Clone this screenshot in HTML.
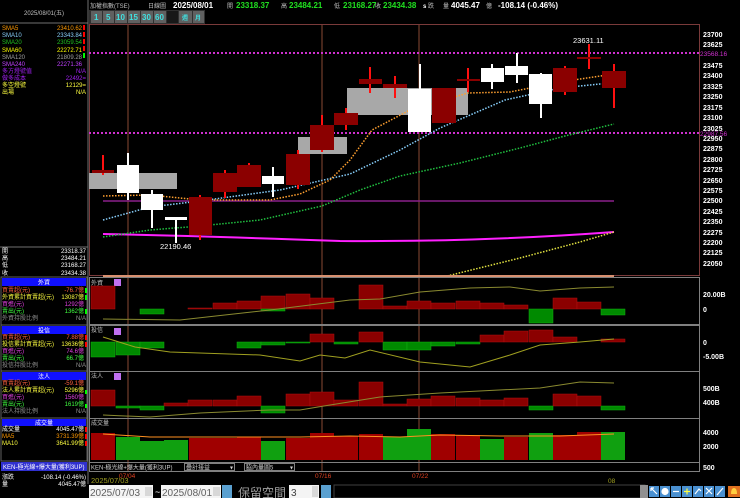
<!DOCTYPE html>
<html><head><meta charset="utf-8"><style>
html,body{margin:0;padding:0;background:#000;width:740px;height:498px;overflow:hidden}
svg{display:block}
text{font-family:"Liberation Sans","Noto Sans CJK TC",sans-serif}
.s{font-size:6px}
</style></head><body>
<svg width="740" height="498" viewBox="0 0 740 498" xmlns="http://www.w3.org/2000/svg">
<rect width="740" height="498" fill="#000"/>
<line x1="88" y1="0" x2="88" y2="484" stroke="#707070"/>
<line x1="0" y1="23" x2="88" y2="23" stroke="#707070"/>
<line x1="0" y1="247" x2="88" y2="247" stroke="#707070"/>
<text x="44" y="15" class="s" fill="#c0c0c0" text-anchor="middle">2025/08/01(五)</text>
<g class="s">
<text x="2" y="30" fill="#ff9900">SMA5</text><text x="82" y="30" fill="#ff9900" text-anchor="end">23410.62</text>
<text x="2" y="37" fill="#87cefa">SMA10</text><text x="82" y="37" fill="#87cefa" text-anchor="end">23343.84</text>
<text x="2" y="44" fill="#20c020">SMA20</text><text x="82" y="44" fill="#20c020" text-anchor="end">23059.54</text>
<text x="2" y="52" fill="#ffff00">SMA60</text><text x="82" y="52" fill="#ffff00" text-anchor="end">22272.71</text>
<text x="2" y="59" fill="#a0a0a0">SMA120</text><text x="82" y="59" fill="#a0a0a0" text-anchor="end">21809.28</text>
<text x="2" y="66" fill="#c040ff">SMA240</text><text x="82" y="66" fill="#c040ff" text-anchor="end">22271.36</text>
<text x="2" y="73" fill="#a020f0">多方燈號值</text><text x="86" y="73" fill="#a020f0" text-anchor="end">N/A</text>
<text x="2" y="80" fill="#a020f0">做多成本</text><text x="86" y="80" fill="#a020f0" text-anchor="end">22492=</text>
<text x="2" y="87" fill="#ffff40">多空燈號</text><text x="86" y="87" fill="#ffff40" text-anchor="end">12129=</text>
<text x="2" y="94" fill="#ffff40">出場</text><text x="86" y="94" fill="#ffff40" text-anchor="end">N/A</text>
</g>
<g fill="#ff0000"><rect x="83" y="25" width="2" height="5"/><rect x="83" y="32" width="2" height="5"/><rect x="83" y="39" width="2" height="5"/><rect x="83" y="46" width="2" height="5"/></g>
<rect x="83" y="53" width="2" height="5" fill="#00ff00"/>
<g class="s" fill="#fff">
<text x="2" y="253">開</text><text x="86" y="253" text-anchor="end">23318.37</text>
<text x="2" y="260">高</text><text x="86" y="260" text-anchor="end">23484.21</text>
<text x="2" y="267">低</text><text x="86" y="267" text-anchor="end">23168.27</text>
<text x="2" y="275">收</text><text x="86" y="275" text-anchor="end">23434.38</text>
</g>
<g class="s">
<rect x="1" y="277" width="86" height="48" fill="none" stroke="#606060"/>
<rect x="2" y="278" width="84" height="8" fill="#1010ff"/><text x="44" y="284.5" fill="#fff" text-anchor="middle">外資</text>
<text x="2" y="292" fill="#ff6040">買賣超(元)</text><text x="84" y="292" fill="#ff6040" text-anchor="end">-76.7億</text>
<text x="2" y="299" fill="#ffff40">外資累計買賣超(元)</text><text x="84" y="299" fill="#ffff40" text-anchor="end">13087億</text>
<text x="2" y="306" fill="#e040e0">買進(元)</text><text x="84" y="306" fill="#e040e0" text-anchor="end">1292億</text>
<text x="2" y="313" fill="#40ff40">賣出(元)</text><text x="84" y="313" fill="#40ff40" text-anchor="end">1362億</text>
<text x="2" y="320" fill="#909090">外資持股比例</text><text x="86" y="320" fill="#909090" text-anchor="end">N/A</text>

<rect x="1" y="325" width="86" height="46" fill="none" stroke="#606060"/>
<rect x="2" y="326" width="84" height="8" fill="#1010ff"/><text x="44" y="332.5" fill="#fff" text-anchor="middle">投信</text>
<text x="2" y="339" fill="#ff6040">買賣超(元)</text><text x="84" y="339" fill="#ff6040" text-anchor="end">7.88億</text>
<text x="2" y="346" fill="#ffff40">投信累計買賣超(元)</text><text x="84" y="346" fill="#ffff40" text-anchor="end">13636億</text>
<text x="2" y="353" fill="#e040e0">買進(元)</text><text x="84" y="353" fill="#e040e0" text-anchor="end">74.6億</text>
<text x="2" y="360" fill="#40ff40">賣出(元)</text><text x="84" y="360" fill="#40ff40" text-anchor="end">66.7億</text>
<text x="2" y="367" fill="#909090">投信持股比例</text><text x="86" y="367" fill="#909090" text-anchor="end">N/A</text>

<rect x="1" y="371" width="86" height="47" fill="none" stroke="#606060"/>
<rect x="2" y="372" width="84" height="8" fill="#1010ff"/><text x="44" y="378.5" fill="#fff" text-anchor="middle">法人</text>
<text x="2" y="385" fill="#ff6040">買賣超(元)</text><text x="84" y="385" fill="#ff6040" text-anchor="end">-59.1億</text>
<text x="2" y="392" fill="#ffff40">法人累計買賣超(元)</text><text x="84" y="392" fill="#ffff40" text-anchor="end">5296億</text>
<text x="2" y="399" fill="#e040e0">買進(元)</text><text x="84" y="399" fill="#e040e0" text-anchor="end">1560億</text>
<text x="2" y="406" fill="#40ff40">賣出(元)</text><text x="84" y="406" fill="#40ff40" text-anchor="end">1619億</text>
<text x="2" y="413" fill="#909090">法人持股比例</text><text x="86" y="413" fill="#909090" text-anchor="end">N/A</text>

<rect x="1" y="418" width="86" height="43" fill="none" stroke="#606060"/>
<rect x="2" y="419" width="84" height="7" fill="#1010ff"/><text x="44" y="425" fill="#fff" text-anchor="middle">成交量</text>
<text x="2" y="431" fill="#fff">成交量</text><text x="84" y="431" fill="#fff" text-anchor="end">4045.47億</text>
<text x="2" y="438" fill="#ff9900">MA5</text><text x="84" y="438" fill="#ff9900" text-anchor="end">3731.39億</text>
<text x="2" y="445" fill="#ffff40">MA10</text><text x="84" y="445" fill="#ffff40" text-anchor="end">3641.99億</text>

<rect x="1" y="462" width="86" height="9" fill="#3030d0"/><text x="3" y="469" fill="#fff">KEN-極光線+爆大量(獲利3UP)</text>
<text x="2" y="479" fill="#fff">漲跌</text><text x="86" y="479" fill="#fff" text-anchor="end">-108.14 (-0.46%)</text>
<text x="2" y="486" fill="#fff">量</text><text x="86" y="486" fill="#fff" text-anchor="end">4045.47億</text>
</g>
<g fill="#00ff00"><rect x="85" y="288" width="2" height="5"/><rect x="85" y="295" width="2" height="5"/><rect x="85" y="309" width="2" height="5"/><rect x="85" y="404" width="2" height="4"/><rect x="85" y="390" width="2" height="4"/></g>
<g fill="#ff0000"><rect x="85" y="335" width="2" height="5"/><rect x="85" y="342" width="2" height="5"/><rect x="85" y="427" width="2" height="5"/><rect x="85" y="434" width="2" height="5"/><rect x="85" y="441" width="2" height="5"/></g>

<text x="90" y="8" class="s" fill="#c0c0c0">加權指數(TSE)</text>
<text x="148" y="8" class="s" fill="#c0c0c0">日線圖</text>
<g font-size="8" font-weight="bold">
<text x="173" y="8" fill="#fff">2025/08/01</text>
<text x="227" y="8" fill="#c0c0c0" font-size="6" font-weight="normal">開</text><text x="236" y="8" fill="#20e020">23318.37</text>
<text x="281" y="8" fill="#c0c0c0" font-size="6" font-weight="normal">高</text><text x="289" y="8" fill="#20e020">23484.21</text>
<text x="334" y="8" fill="#c0c0c0" font-size="6" font-weight="normal">低</text><text x="343" y="8" fill="#20e020">23168.27</text>
<text x="375" y="8" fill="#c0c0c0" font-size="6" font-weight="normal">收</text><text x="383" y="8" fill="#20e020">23434.38</text>
<text x="423" y="8" fill="#fff" font-size="6">s</text><text x="428" y="8" fill="#c0c0c0" font-size="6" font-weight="normal">跌</text>
<text x="443" y="8" fill="#c0c0c0" font-size="6" font-weight="normal">量</text><text x="451" y="8" fill="#fff">4045.47</text>
<text x="486" y="8" fill="#c0c0c0" font-size="6" font-weight="normal">億</text><text x="498" y="8" fill="#fff">-108.14 (-0.46%)</text>
</g>
<rect x="89" y="10" width="116" height="14" fill="#303030"/>
<g font-size="8" font-family="Liberation Serif" fill="#40e0e0" font-weight="bold">
<rect x="91" y="11" width="11" height="12" fill="#606060"/><text x="94" y="20">1</text>
<rect x="103" y="11" width="11" height="12" fill="#606060"/><text x="106" y="20">5</text>
<rect x="115" y="11" width="12" height="12" fill="#606060"/><text x="116" y="20">10</text>
<rect x="128" y="11" width="12" height="12" fill="#606060"/><text x="129" y="20">15</text>
<rect x="141" y="11" width="12" height="12" fill="#606060"/><text x="142" y="20">30</text>
<rect x="154" y="11" width="12" height="12" fill="#606060"/><text x="155" y="20">60</text>
<rect x="167" y="11" width="11" height="12" fill="#181818"/>
<rect x="179" y="11" width="13" height="12" fill="#606060"/><text x="182" y="20" font-size="6">週</text>
<rect x="193" y="11" width="11" height="12" fill="#606060"/><text x="195" y="20" font-size="6">月</text>
</g>

<rect x="89.5" y="24.5" width="610" height="251" fill="none" stroke="#7a3a3a"/>
<g stroke="#8a4a35" stroke-width="1"><line x1="128" y1="25" x2="128" y2="472"/><line x1="322" y1="25" x2="322" y2="472"/><line x1="419" y1="25" x2="419" y2="472"/></g>
<line x1="89" y1="53" x2="700" y2="53" stroke="#d030d0" stroke-width="2" stroke-dasharray="2,2"/>
<line x1="89" y1="133" x2="700" y2="133" stroke="#d030d0" stroke-width="2" stroke-dasharray="2,2"/>
<g fill="#a8a8a8"><rect x="89" y="173" width="88" height="16"/><rect x="298" y="137" width="49" height="17"/><rect x="347" y="88" width="121" height="27"/></g>
<line x1="103" y1="201" x2="614" y2="201" stroke="#8a208a" stroke-width="1.5"/>
<path d="M103 234 Q 200 236 340 241 Q 480 242 614 232" stroke="#ff20ff" stroke-width="2" fill="none"/>
<g fill="none" stroke-width="1.5" stroke-dasharray="1.5,1.5">
<polyline stroke="#e0e040" points="447,276 520,258 580,242 614,232"/>
<polyline stroke="#20c040" points="103,237 150,230 200,226 260,220 322,206 360,190 400,176 460,163 520,148 565,136 614,124"/>
<polyline stroke="#87cefa" points="103,220 150,207 200,201 280,190 350,174 400,150 440,128 505,100 560,88 600,84 614,84"/>
<polyline stroke="#ffa030" points="103,196 150,195 200,200 270,200 300,194 330,180 350,160 372,130 410,110 468,93 510,92 560,82 614,74"/>
</g>
<g>
<g stroke="#ff1010" stroke-width="2">
<line x1="103" y1="155" x2="103" y2="175"/>
<line x1="200" y1="195" x2="200" y2="240"/>
<line x1="225" y1="170" x2="225" y2="198"/>
<line x1="249" y1="163" x2="249" y2="187"/>
<line x1="298" y1="150" x2="298" y2="189"/>
<line x1="322" y1="115" x2="322" y2="152"/>
<line x1="346" y1="108" x2="346" y2="130"/>
<line x1="370" y1="67" x2="370" y2="93"/>
<line x1="395" y1="76" x2="395" y2="98"/>
<line x1="468" y1="68" x2="468" y2="92"/>
<line x1="565" y1="66" x2="565" y2="95"/>
<line x1="589" y1="44" x2="589" y2="69"/>
<line x1="614" y1="64" x2="614" y2="108"/>
</g>
<g stroke="#fff" stroke-width="2">
<line x1="128" y1="153" x2="128" y2="200"/>
<line x1="152" y1="190" x2="152" y2="228"/>
<line x1="176" y1="218" x2="176" y2="243"/>
<line x1="273" y1="167" x2="273" y2="197"/>
<line x1="420" y1="64" x2="420" y2="132"/>
<line x1="492" y1="64" x2="492" y2="89"/>
<line x1="517" y1="53" x2="517" y2="83"/>
<line x1="541" y1="73" x2="541" y2="118"/>
</g>
<g fill="#8b0000">
<rect x="92" y="170" width="22" height="3"/>
<rect x="189" y="197" width="23" height="38"/>
<rect x="213" y="173" width="24" height="19"/>
<rect x="237" y="165" width="24" height="22"/>
<rect x="286" y="154" width="24" height="31"/>
<rect x="310" y="125" width="24" height="25"/>
<rect x="334" y="113" width="24" height="12"/>
<rect x="359" y="79" width="23" height="5"/>
<rect x="383" y="84" width="24" height="4"/>
<rect x="432" y="88" width="24" height="35"/>
<rect x="457" y="79" width="23" height="2"/>
<rect x="553" y="68" width="24" height="24"/>
<rect x="577" y="57" width="24" height="2"/>
<rect x="602" y="71" width="24" height="17"/>
</g>
<g fill="#fff">
<rect x="117" y="165" width="22" height="28"/>
<rect x="141" y="194" width="22" height="16"/>
<rect x="165" y="217" width="22" height="3"/>
<rect x="262" y="176" width="22" height="8"/>
<rect x="408" y="89" width="23" height="43"/>
<rect x="481" y="68" width="23" height="14"/>
<rect x="505" y="66" width="23" height="9"/>
<rect x="529" y="74" width="23" height="30"/>
</g>
</g>
<text x="160" y="249" font-size="7.5" fill="#fff">22190.46</text>
<text x="573" y="43" font-size="7.5" fill="#fff">23631.11</text>
<rect x="103" y="275" width="511" height="2" fill="#d89070"/>
<g font-size="7" fill="#fff" font-weight="bold">
<text x="703" y="37">23700</text><text x="703" y="47">23625</text>
<text x="703" y="68">23475</text><text x="703" y="78">23400</text><text x="703" y="89">23325</text><text x="703" y="99">23250</text><text x="703" y="110">23175</text><text x="703" y="120">23100</text><text x="703" y="131">23025</text>
<text x="703" y="141">22950</text><text x="703" y="151">22875</text><text x="703" y="162">22800</text><text x="703" y="172">22725</text><text x="703" y="183">22650</text><text x="703" y="193">22575</text><text x="703" y="203">22500</text><text x="703" y="214">22425</text><text x="703" y="224">22350</text><text x="703" y="235">22275</text><text x="703" y="245">22200</text><text x="703" y="255">22125</text><text x="703" y="266">22050</text>
</g>
<text x="700" y="56" font-size="6.5" fill="#d030d0">23568.16</text>
<text x="700" y="136" font-size="6.5" fill="#d030d0">22987.56</text>

<g fill="none" stroke="#808080"><rect x="89.5" y="277.5" width="610" height="47"/><rect x="89.5" y="325.5" width="610" height="46"/><rect x="89.5" y="371.5" width="610" height="47"/><rect x="89.5" y="418.5" width="610" height="44"/></g>
<g class="s" fill="#c0c0c0"><text x="91" y="285">外資</text><text x="91" y="332">投信</text><text x="91" y="378">法人</text><text x="91" y="425">成交量</text></g>
<g fill="#c070f0"><rect x="114" y="279" width="7" height="7"/><rect x="114" y="328" width="7" height="7"/><rect x="114" y="373" width="7" height="7"/></g>

<g fill="#8b0000" stroke="#b01010" stroke-width="0.5">
<rect x="91" y="286" width="24" height="23"/><rect x="188" y="308" width="24" height="1"/><rect x="213" y="303" width="24" height="6"/><rect x="237" y="301" width="24" height="8"/><rect x="261" y="296" width="24" height="13"/><rect x="286" y="294" width="24" height="15"/><rect x="310" y="298" width="24" height="11"/><rect x="359" y="285" width="24" height="24"/><rect x="383" y="306" width="24" height="3"/><rect x="407" y="301" width="24" height="8"/><rect x="431" y="303" width="24" height="6"/><rect x="456" y="301" width="24" height="8"/><rect x="480" y="303" width="24" height="6"/><rect x="504" y="305" width="24" height="4"/><rect x="553" y="298" width="24" height="11"/><rect x="577" y="302" width="24" height="7"/>
</g>
<g fill="#008a00" stroke="#10b010" stroke-width="0.5">
<rect x="140" y="309" width="24" height="5"/><rect x="261" y="309" width="24" height="2"/><rect x="529" y="309" width="24" height="14"/><rect x="601" y="309" width="24" height="6"/>
</g>
<polyline fill="none" stroke="#8a8a30" points="103,319 180,320 270,310 350,300 380,299 420,292 470,288 510,287 540,291 580,288 614,287"/>
<g fill="#008a00" stroke="#10b010" stroke-width="0.5">
<rect x="91" y="342" width="24" height="15"/><rect x="116" y="342" width="24" height="13"/><rect x="140" y="342" width="24" height="6"/><rect x="237" y="342" width="24" height="6"/><rect x="261" y="342" width="24" height="3"/><rect x="286" y="342" width="24" height="1"/><rect x="334" y="342" width="24" height="2"/><rect x="383" y="342" width="24" height="8"/><rect x="407" y="342" width="24" height="8"/><rect x="431" y="342" width="24" height="4"/><rect x="456" y="342" width="24" height="2"/>
</g>
<g fill="#8b0000" stroke="#b01010" stroke-width="0.5">
<rect x="310" y="334" width="24" height="8"/><rect x="359" y="332" width="24" height="10"/><rect x="480" y="335" width="24" height="7"/><rect x="504" y="331" width="24" height="11"/><rect x="529" y="330" width="24" height="12"/><rect x="553" y="337" width="24" height="5"/><rect x="601" y="339" width="24" height="3"/>
</g>
<polyline fill="none" stroke="#a0a020" points="103,337 135,347 170,352 260,355 300,361 320,355 345,358 370,350 420,362 470,367 510,355 540,345 580,342 614,339"/>
<g fill="#8b0000" stroke="#b01010" stroke-width="0.5">
<rect x="91" y="390" width="24" height="16"/><rect x="164" y="403" width="24" height="3"/><rect x="188" y="400" width="24" height="6"/><rect x="213" y="400" width="24" height="6"/><rect x="237" y="396" width="24" height="10"/><rect x="286" y="394" width="24" height="12"/><rect x="310" y="392" width="24" height="14"/><rect x="334" y="400" width="24" height="6"/><rect x="359" y="382" width="24" height="24"/><rect x="383" y="404" width="24" height="2"/><rect x="407" y="399" width="24" height="7"/><rect x="431" y="396" width="24" height="10"/><rect x="456" y="398" width="24" height="8"/><rect x="480" y="400" width="24" height="6"/><rect x="504" y="398" width="24" height="8"/><rect x="553" y="394" width="24" height="12"/><rect x="577" y="396" width="24" height="10"/>
</g>
<g fill="#008a00" stroke="#10b010" stroke-width="0.5">
<rect x="116" y="406" width="24" height="2"/><rect x="140" y="406" width="24" height="4"/><rect x="261" y="406" width="24" height="7"/><rect x="529" y="406" width="24" height="4"/><rect x="601" y="406" width="24" height="4"/>
</g>
<polyline fill="none" stroke="#8a8a30" points="103,415 150,417 200,413 270,410 300,410 330,405 380,397 440,393 540,388 580,382 614,383"/>
<g fill="#a00000">
<rect x="91" y="433" width="24" height="27"/><rect x="189" y="438" width="24" height="22"/><rect x="213" y="438" width="24" height="22"/><rect x="237" y="437" width="24" height="23"/><rect x="286" y="438" width="24" height="22"/><rect x="310" y="433" width="24" height="27"/><rect x="334" y="436" width="24" height="24"/><rect x="359" y="434" width="24" height="26"/><rect x="431" y="434" width="24" height="26"/><rect x="456" y="435" width="24" height="25"/><rect x="504" y="437" width="24" height="23"/><rect x="553" y="435" width="24" height="25"/><rect x="577" y="432" width="24" height="28"/>
</g>
<g fill="#10a010">
<rect x="116" y="437" width="24" height="23"/><rect x="140" y="441" width="24" height="19"/><rect x="164" y="440" width="24" height="20"/><rect x="261" y="441" width="24" height="19"/><rect x="383" y="437" width="24" height="23"/><rect x="407" y="429" width="24" height="31"/><rect x="480" y="439" width="24" height="21"/><rect x="529" y="433" width="24" height="27"/><rect x="601" y="432" width="24" height="28"/>
</g>
<polyline fill="none" stroke="#ff9020" points="103,434 150,437 200,437 260,437 300,437 350,436 400,437 440,435 500,436 560,436 614,434"/>
<g font-size="7" fill="#fff" font-weight="bold">
<text x="703" y="297">20.00B</text><text x="703" y="312">0</text><text x="703" y="345">0</text><text x="703" y="359">-5.00B</text><text x="703" y="391">500B</text><text x="703" y="405">400B</text><text x="703" y="435">4000</text><text x="703" y="449">2000</text><text x="703" y="470">500</text>
</g>
<rect x="89.5" y="462.5" width="610" height="9" fill="none" stroke="#808080"/>
<g class="s" fill="#d0d0d0">
<text x="91" y="469.5">KEN-極光線+爆大量(獲利3UP)</text>
<rect x="184.5" y="463.5" width="50" height="7" fill="none" stroke="#808080"/><text x="186" y="469.5">疊計接益</text><text x="230" y="469.5">▾</text>
<rect x="244.5" y="463.5" width="50" height="7" fill="none" stroke="#808080"/><text x="246" y="469.5">脇內量圖5</text><text x="290" y="469.5">▾</text>
</g>
<g font-size="6.5">
<text x="119" y="478" fill="#e04020">07/04</text><text x="315" y="478" fill="#e04020">07/16</text><text x="412" y="478" fill="#e04020">07/22</text><text x="608" y="483" fill="#a0a020">08</text>
<text x="91" y="483" fill="#a0a020" font-size="7.5">2025/07/03</text>
</g>
<rect x="89" y="485" width="64" height="13" fill="#f4f4f4"/><text x="90" y="496" font-size="10" fill="#606060" font-family="Liberation Serif">2025/07/03</text>
<rect x="145" y="487" width="7" height="9" fill="#d8d8d8"/>
<text x="155" y="495" font-size="9" fill="#fff">~</text>
<rect x="161" y="485" width="60" height="13" fill="#f4f4f4"/><text x="162" y="496" font-size="10" fill="#606060" font-family="Liberation Serif">2025/08/01</text>
<rect x="213" y="487" width="7" height="9" fill="#d8d8d8"/>
<rect x="222" y="485" width="10" height="13" fill="#5aa0d0"/>
<text x="238" y="497" font-size="12" fill="#a0a0a0" font-family="Noto Sans CJK TC,sans-serif">保留空間</text>
<rect x="289" y="485" width="30" height="13" fill="#f4f4f4"/><text x="291" y="496" font-size="10" fill="#404040" font-family="Liberation Serif">3</text>
<rect x="312" y="486" width="6" height="11" fill="#d8d8d8"/>
<rect x="321" y="485" width="10" height="13" fill="#5aa0d0"/>
<rect x="334" y="485" width="311" height="13" fill="#000" stroke="#404040"/>
<rect x="640" y="485" width="8" height="13" fill="#909090"/>
<g fill="#4a90d0">
<rect x="649" y="486" width="10" height="11"/><rect x="660" y="486" width="10" height="11"/><rect x="671" y="486" width="10" height="11"/><rect x="682" y="486" width="10" height="11"/><rect x="693" y="486" width="10" height="11"/><rect x="704" y="486" width="10" height="11"/><rect x="715" y="486" width="10" height="11"/>
</g>
<rect x="728" y="486" width="12" height="11" fill="#e07020"/>
<g stroke="#fff" stroke-width="1.2" fill="none">
<path d="M651 488 L657 494 M651 488 h3 M651 488 v3"/>
<circle cx="665" cy="491.5" r="3" fill="#fff"/>
<path d="M673 491.5 h6"/>
<path d="M684 491.5 h6 M687 488.5 v6" stroke="#ffff40"/>
<path d="M695 494 l4 -5 l2 2"/>
<path d="M706 488 l6 6 M712 488 l-6 6"/>
<path d="M717 495 l6 -7"/>
</g>
<path d="M731 494 q0 -6 3 -6 q3 0 3 6 z" fill="#ffd040"/>
</svg>
</body></html>
